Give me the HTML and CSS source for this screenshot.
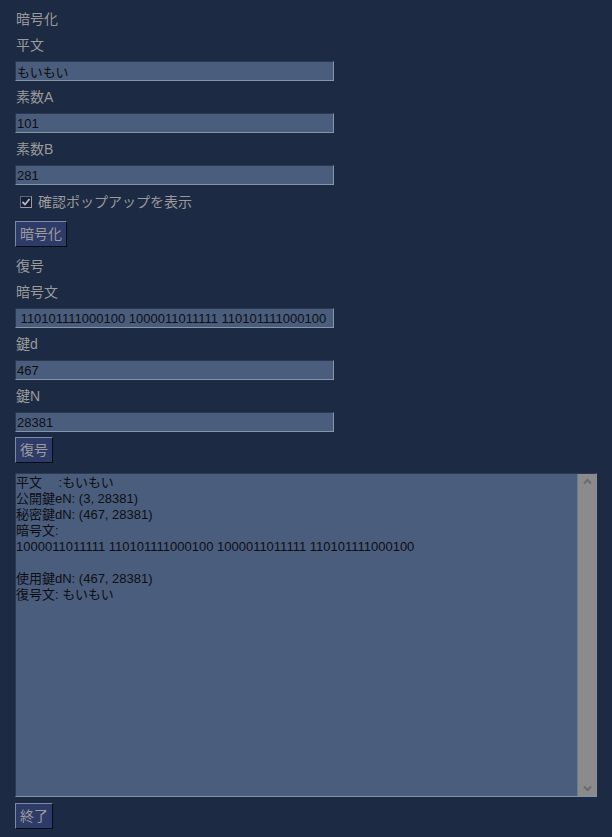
FILE: index.html
```html
<!DOCTYPE html>
<html lang="ja">
<head>
<meta charset="utf-8">
<title>RSA</title>
<link rel="stylesheet" href="styles.css">
</head>
<body>
<main class="app">
  <div class="title">暗号化</div>
  <div class="label">平文</div>
  <input class="field" type="text" value="もいもい">
  <div class="label">素数A</div>
  <input class="field" type="text" value="101">
  <div class="label">素数B</div>
  <input class="field" type="text" value="281">
  <label class="check">
    <span class="box"><svg width="10" height="10" viewBox="0 0 10 10"><path d="M1.5 5 L4 7.5 L8.5 2" fill="none" stroke="#b8b8c4" stroke-width="1.8"/></svg></span>
    <span>確認ポップアップを表示</span>
  </label>
  <button class="btn btn-enc" type="button">暗号化</button>

  <div class="title sec">復号</div>
  <div class="label">暗号文</div>
  <input class="field" type="text" value=" 110101111000100 1000011011111 110101111000100">
  <div class="label">鍵d</div>
  <input class="field" type="text" value="467">
  <div class="label">鍵N</div>
  <input class="field" type="text" value="28381">
  <button class="btn btn-dec" type="button">復号</button>

  <div class="output">
    <div class="output-text">平文　 :もいもい
公開鍵eN: (3, 28381)
秘密鍵dN: (467, 28381)
暗号文:
1000011011111 110101111000100 1000011011111 110101111000100

使用鍵dN: (467, 28381)
復号文: もいもい</div>
    <div class="scrollbar">
      <svg width="9" height="7" viewBox="0 0 9 7"><path d="M1 5.5 L4.5 2 L8 5.5" fill="none" stroke="#6b6b6b" stroke-width="2"/></svg>
      <svg width="9" height="7" viewBox="0 0 9 7"><path d="M1 1.5 L4.5 5 L8 1.5" fill="none" stroke="#6b6b6b" stroke-width="2"/></svg>
    </div>
  </div>
  <button class="btn btn-end" type="button">終了</button>
</main>
</body>
</html>
```
FILE: styles.css
```css
html, body {
  margin: 0;
  padding: 0;
  background: #1c2a44;
}
body {
  height: 837px;
  overflow: hidden;
}
.app {
  display: flex;
  flex-direction: column;
  align-items: flex-start;
  padding: 8px 0 0 15px;
  font-family: "Liberation Sans", "Noto Sans CJK JP", sans-serif;
  color: #9a9a9a;
}
.title, .label {
  font-size: 14px;
  line-height: 20px;
  height: 20px;
  padding-left: 1px;
}
.label {
  margin-top: 6px;
  margin-bottom: 6px;
}
.title {
  margin-top: 1px;
}
.title.sec {
  margin-top: 9px;
}
.field {
  box-sizing: border-box;
  width: 319px;
  height: 20px;
  margin: 0;
  padding: 0 1px;
  border: 1px solid;
  border-color: #2a3852 #8595a9 #8595a9 #2a3852;
  background: #4a5d7c;
  color: #0e0e14;
  font-family: "Liberation Sans", "Noto Sans CJK JP", sans-serif;
  font-size: 13px;
  outline: none;
}
.check {
  display: flex;
  align-items: center;
  gap: 6px;
  height: 20px;
  margin-top: 7px;
  padding-left: 5px;
  font-size: 14px;
  line-height: 20px;
}
.box {
  box-sizing: border-box;
  width: 12px;
  height: 12px;
  display: flex;
  align-items: center;
  justify-content: center;
  background: #161d36;
  border: 1px solid;
  border-color: #5d6578 #9a9aa6 #9a9aa6 #5d6578;
}
.btn {
  box-sizing: border-box;
  height: 26px;
  margin: 0;
  padding: 2px 4px;
  border: 1px solid;
  border-color: #7d88a6 #070b16 #070b16 #7d88a6;
  background: #2e3a68;
  color: #9c9c9c;
  font-family: "Liberation Sans", "Noto Sans CJK JP", sans-serif;
  font-size: 14px;
  line-height: 20px;
}
.btn-enc {
  margin-top: 9px;
}
.btn-dec {
  margin-top: 5px;
}
.output {
  box-sizing: border-box;
  display: flex;
  width: 582px;
  height: 324px;
  margin-top: 10px;
  border: 1px solid;
  border-color: #2c3a56 #7d94a6 #7d94a6 #2c3a56;
  background: #4a5d7c;
}
.output-text {
  flex: 1;
  padding: 1px 0 0 0;
  white-space: pre;
  font-size: 13px;
  line-height: 16px;
  color: #0e0e14;
  overflow: hidden;
}
.scrollbar {
  box-sizing: border-box;
  width: 19px;
  display: flex;
  flex-direction: column;
  justify-content: space-between;
  align-items: center;
  padding: 4px 0 4px 1px;
  background: #8b8b8b;
  border-left: 1px solid #6c7c8e;
}
.btn-end {
  margin-top: 6px;
}
```
